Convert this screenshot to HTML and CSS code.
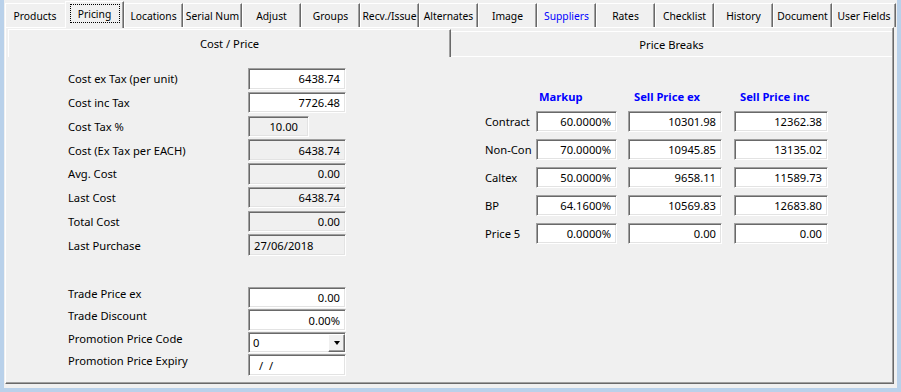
FILE: index.html
```html
<!DOCTYPE html>
<html lang="en">
  <head>
    <meta charset="UTF-8" />
    <title>Pricing</title>
    <link rel="stylesheet" href="styles.css">
  </head>
  <body>
    <div class="window">
      <!-- Top tab strip -->
      <div class="tabs">
        <div class="tab first">Products</div>
        <div class="tab active"><span class="focus">Pricing</span></div>
        <div class="tab">Locations</div>
        <div class="tab">Serial Num</div>
        <div class="tab">Adjust</div>
        <div class="tab">Groups</div>
        <div class="tab">Recv./Issue</div>
        <div class="tab">Alternates</div>
        <div class="tab">Image</div>
        <div class="tab link">Suppliers</div>
        <div class="tab">Rates</div>
        <div class="tab">Checklist</div>
        <div class="tab">History</div>
        <div class="tab">Document</div>
        <div class="tab last">User Fields</div>
      </div>

      <div class="page">
        <div class="subtabs">
          <div class="subtab active">Cost / Price</div>
          <div class="subtab inactive">Price Breaks</div>
        </div>

        <div class="content">
          <!-- Cost / Price -->
          <div class="cost">
            <div class="group">
              <span class="label">Cost ex Tax (per unit)</span>
              <span class="field">6438.74</span>

              <span class="label">Cost inc Tax</span>
              <span class="field">7726.48</span>

              <span class="label">Cost Tax %</span>
              <span class="field readonly short">10.00</span>

              <span class="label">Cost (Ex Tax per EACH)</span>
              <span class="field readonly">6438.74</span>

              <span class="label">Avg. Cost</span>
              <span class="field readonly">0.00</span>

              <span class="label">Last Cost</span>
              <span class="field readonly">6438.74</span>

              <span class="label">Total Cost</span>
              <span class="field readonly">0.00</span>

              <span class="label">Last Purchase</span>
              <span class="field readonly left">27/06/2018</span>
            </div>

            <div class="group lower">
              <span class="label">Trade Price ex</span>
              <span class="field">0.00</span>

              <span class="label">Trade Discount</span>
              <span class="field">0.00%</span>

              <span class="label">Promotion Price Code</span>
              <span class="field select">
                <span>0</span>
                <span class="drop"><span class="arrow"></span></span>
              </span>

              <span class="label">Promotion Price Expiry</span>
              <span class="field left date">/  /</span>
            </div>
          </div>

          <!-- Price Breaks -->
          <div class="breaks">
            <span></span>
            <span class="head markup">Markup</span>
            <span class="head">Sell Price ex</span>
            <span class="head">Sell Price inc</span>

            <span class="row-label">Contract</span>
            <span class="field pct">60.0000%</span>
            <span class="field wide">10301.98</span>
            <span class="field wide">12362.38</span>

            <span class="row-label">Non-Con</span>
            <span class="field pct">70.0000%</span>
            <span class="field wide">10945.85</span>
            <span class="field wide">13135.02</span>

            <span class="row-label">Caltex</span>
            <span class="field pct">50.0000%</span>
            <span class="field wide">9658.11</span>
            <span class="field wide">11589.73</span>

            <span class="row-label">BP</span>
            <span class="field pct">64.1600%</span>
            <span class="field wide">10569.83</span>
            <span class="field wide">12683.80</span>

            <span class="row-label">Price 5</span>
            <span class="field pct">0.0000%</span>
            <span class="field wide">0.00</span>
            <span class="field wide">0.00</span>
          </div>
        </div>
      </div>
    </div>
  </body>
</html>
```

FILE: styles.css
```css
* {
  box-sizing: border-box;
}

body {
  margin: 0;
  width: 901px;
  height: 392px;
  overflow: hidden;
  background: #b9d1ea;
  font-family: "Noto Sans", Arial, sans-serif;
  font-size: 11.2px;
  color: #000;
}

.window {
  margin-left: 4px;
  width: 893px;
  height: 388px;
  padding-top: 1px;
  background: #f0f0f0;
}

/* top tab strip */
.tabs {
  display: flex;
  height: 26px;
  padding-left: 1px;
}

.tab {
  width: 59px;
  height: 24px;
  margin-top: 2px;
  padding-top: 1px;
  border-top: 1px solid #fff;
  border-left: 1px solid #fff;
  border-right: 1px solid #696969;
  box-shadow: inset -1px 0 0 #a0a0a0;
  display: flex;
  align-items: center;
  justify-content: center;
  font-size: 10.3px;
  white-space: nowrap;
  overflow: hidden;
}

.tab.first {
  width: 60px;
  border-right-color: transparent;
  box-shadow: none;
}

.tab.active {
  position: relative;
  z-index: 1;
  height: 27px;
  margin-top: 0;
  margin-bottom: -1px;
  padding-top: 2px;
  align-items: flex-start;
  background: #f0f0f0;
}

.tab.last {
  width: 64px;
}

.tab.link {
  color: #0000ff;
}

.focus {
  width: 50px;
  height: 19px;
  border: 1px dotted #000;
  display: flex;
  align-items: center;
  justify-content: center;
}

/* page under the tabs */
.page {
  margin-left: 1px;
  width: 889px;
  height: 357px;
  padding: 1px 0 0 1px;
  border-top: 1px solid #fff;
  border-left: 1px solid #fff;
  border-right: 1px solid #696969;
  border-bottom: 1px solid #696969;
  box-shadow: inset -1px -1px 0 #a0a0a0;
}

.subtabs {
  display: flex;
  height: 28px;
  margin-left: 1px;
}

.subtab {
  display: flex;
  align-items: center;
  justify-content: center;
}

.subtab.active {
  width: 443px;
  border-top: 1px solid #fff;
  border-left: 1px solid #fff;
  border-right: 1px solid #696969;
  box-shadow: inset -1px 0 0 #a0a0a0;
}

.subtab.inactive {
  flex: 1;
  margin-top: 2px;
  margin-right: 1px;
  border-top: 1px solid #fff;
  border-bottom: 1px solid #fff;
}

.content {
  display: flex;
}

/* cost column */
.cost {
  width: 444px;
  padding: 11px 0 0 61px;
}

.group {
  display: grid;
  grid-template-columns: 180px 98px;
  grid-auto-rows: 21.5px;
  row-gap: 2.25px;
  align-items: center;
}

.group.lower {
  margin-top: 31px;
  row-gap: 1px;
}

.group.lower .label {
  align-self: start;
  line-height: 15px;
  margin-top: -1px;
}

.label {
  white-space: nowrap;
}

.field {
  height: 100%;
  width: 98px;
  padding: 0 5px;
  display: flex;
  align-items: center;
  justify-content: flex-end;
  background: #fff;
  border-top: 1px solid #a0a0a0;
  border-left: 1px solid #a0a0a0;
  border-right: 1px solid #fff;
  border-bottom: 1px solid #fff;
  box-shadow: inset 1px 1px 0 #696969, inset -1px -1px 0 #e3e3e3;
  white-space: pre;
}

.field.readonly {
  background: #f0f0f0;
}

.field.short {
  width: 61px;
  padding-right: 10px;
}

.field.left {
  justify-content: flex-start;
}

.field.date {
  padding-left: 10px;
}

.field.select {
  justify-content: space-between;
  padding: 0 0 0 4px;
}

.drop {
  width: 17px;
  height: 18px;
  display: flex;
  align-items: center;
  justify-content: center;
  background: #f0f0f0;
  border-top: 1px solid #fff;
  border-left: 1px solid #fff;
  border-right: 1px solid #696969;
  border-bottom: 1px solid #696969;
  box-shadow: inset -1px -1px 0 #a0a0a0;
}

.arrow {
  width: 0;
  height: 0;
  margin-top: 1px;
  border-top: 4px solid #000;
  border-left: 3.5px solid transparent;
  border-right: 3.5px solid transparent;
}

/* price breaks */
.breaks {
  display: grid;
  grid-template-columns: 51px 92px 106px 94px;
  grid-template-rows: 15px;
  grid-auto-rows: 21px;
  row-gap: 7px;
  align-items: center;
  padding: 32px 0 0 34px;
}

.head {
  color: #0000ff;
  font-weight: bold;
  padding-left: 6px;
  line-height: 15px;
  white-space: nowrap;
}

.head.markup {
  padding-left: 3px;
}

.row-label {
  white-space: nowrap;
}

.field.pct {
  width: 81px;
}

.field.wide {
  width: 94px;
}
```
